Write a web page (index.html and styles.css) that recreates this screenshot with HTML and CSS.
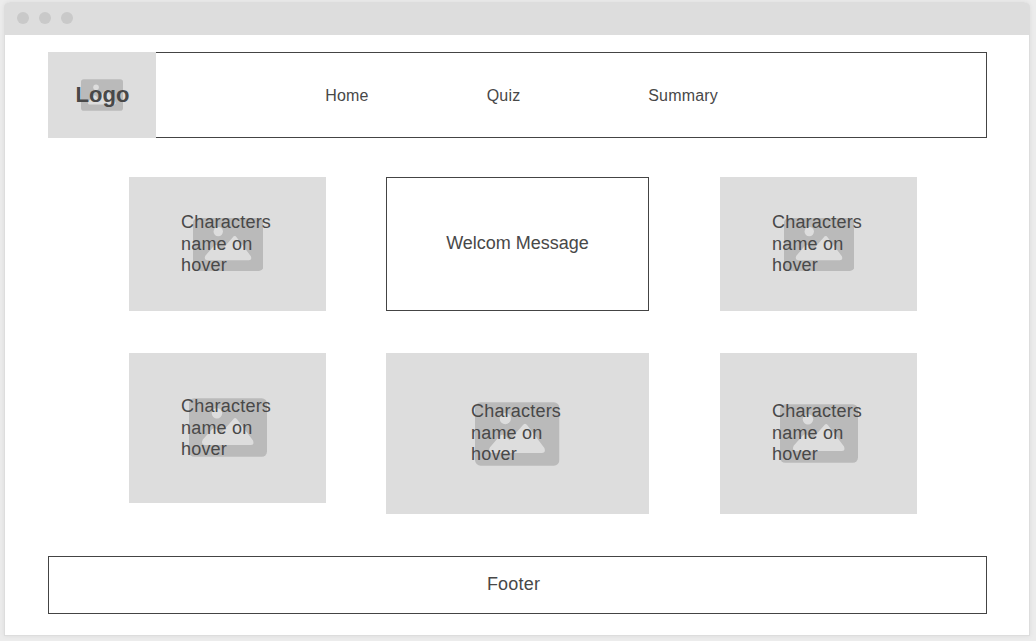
FILE: index.html
```html
<!DOCTYPE html>
<html lang="en">
<head>
<meta charset="utf-8">
<title>Wireframe</title>
<link rel="stylesheet" href="styles.css">
</head>
<body>
<svg class="defs" aria-hidden="true">
  <symbol id="image" viewBox="0 0 120 90">
    <rect width="120" height="90" rx="8" fill="#bababa"/>
    <circle cx="43" cy="23" r="8" fill="#ddd"/>
    <path d="M67.500 33Q71 28 74.500 33L98.500 65Q101 72 95 72H24Q18 71 21 64L35 48Q39 44 43 48L49 54Z" fill="#ddd"/>
  </symbol>
</svg>
<div class="window">
  <div class="titlebar"><span class="dot"></span><span class="dot"></span><span class="dot"></span></div>
  <div class="page">
    <header class="header">
      <div class="logo"><svg class="icon"><use href="#image"/></svg><span class="logo-text">Logo</span></div>
      <nav class="nav"><a>Home</a><a>Quiz</a><a>Summary</a></nav>
    </header>
    <main class="grid">
      <div class="card short"><svg class="icon small"><use href="#image"/></svg><p class="label">Characters name on hover</p></div>
      <div class="welcome"><span>Welcom Message</span></div>
      <div class="card short"><svg class="icon small"><use href="#image"/></svg><p class="label">Characters name on hover</p></div>
      <div class="card medium"><svg class="icon mid"><use href="#image"/></svg><p class="label">Characters name on hover</p></div>
      <div class="card tall"><svg class="icon large"><use href="#image"/></svg><p class="label">Characters name on hover</p></div>
      <div class="card tall"><svg class="icon mid"><use href="#image"/></svg><p class="label">Characters name on hover</p></div>
    </main>
    <footer class="footer"><span>Footer</span></footer>
  </div>
</div>
</body>
</html>
```
FILE: styles.css
```css
* { box-sizing: border-box; }
body {
  margin: 0;
  height: 641px;
  padding: 2px 6px 5px 4px;
  overflow: hidden;
  background: #ececec;
  color: #484848;
  font: 18px/21.6px "Liberation Sans", Arial, sans-serif;
  letter-spacing: 0.2px;
}
.defs { display: block; width: 0; height: 0; }
.window {
  height: 634px;
  border: 1px solid #ddd;
  border-top: 0;
  border-radius: 6px 6px 0 0;
  background: #fff;
  box-shadow: 0 0 5px rgba(0, 0, 0, 0.07);
}
.titlebar {
  display: flex;
  align-items: center;
  gap: 10px;
  height: 33px;
  margin: 0 -1px;
  padding: 0 13px 1px;
  border-radius: 6px 6px 0 0;
  background: #ddd;
}
.dot { width: 12px; height: 12px; border-radius: 50%; background: #c9c9c9; }
.page { padding: 17px 42px 0 43px; }
.header { display: flex; height: 86px; }
.logo {
  display: grid;
  place-items: center;
  width: 108px;
  background: #ddd;
}
.logo > *, .card > * { grid-area: 1 / 1; }
.logo-text { font-size: 22px; font-weight: bold; z-index: 1; padding-left: 1px; letter-spacing: 0.1px; }
.icon { width: 42px; height: 32px; }
.small { width: 70.500px; height: 53px; margin-left: 1px; }
.mid { width: 78px; height: 59px; }
.medium .mid { margin-bottom: 1px; }
.large { width: 84.500px; height: 64px; }
.nav {
  display: grid;
  grid-template-columns: repeat(3, 161.500px);
  align-items: center;
  flex: 1;
  padding: 2px 0 0 169.200px;
  border: 1px solid #444;
  border-left: 0;
  font-size: 16px;
}
.grid {
  display: grid;
  grid-template-columns: 197px 263px 197px;
  column-gap: 60px;
  row-gap: 42px;
  align-items: start;
  height: 337px;
  margin: 39px 0 0 81px;
}
.grid > :nth-child(3n) { margin-left: 11px; width: 197px; }
.card { display: grid; place-items: center; background: #ddd; }
.short { height: 134px; }
.medium { height: 150px; }
.tall { height: 161px; }
.label { width: 93px; margin: 0; z-index: 1; }
.short .label, .medium .label { padding-top: 1px; }
.welcome {
  display: grid;
  place-items: center;
  height: 134px;
  border: 1px solid #444;
  letter-spacing: 0;
}
.footer {
  display: grid;
  place-items: center;
  height: 58px;
  margin-top: 42px;
  padding-right: 8px;
  border: 1px solid #444;
}
```
